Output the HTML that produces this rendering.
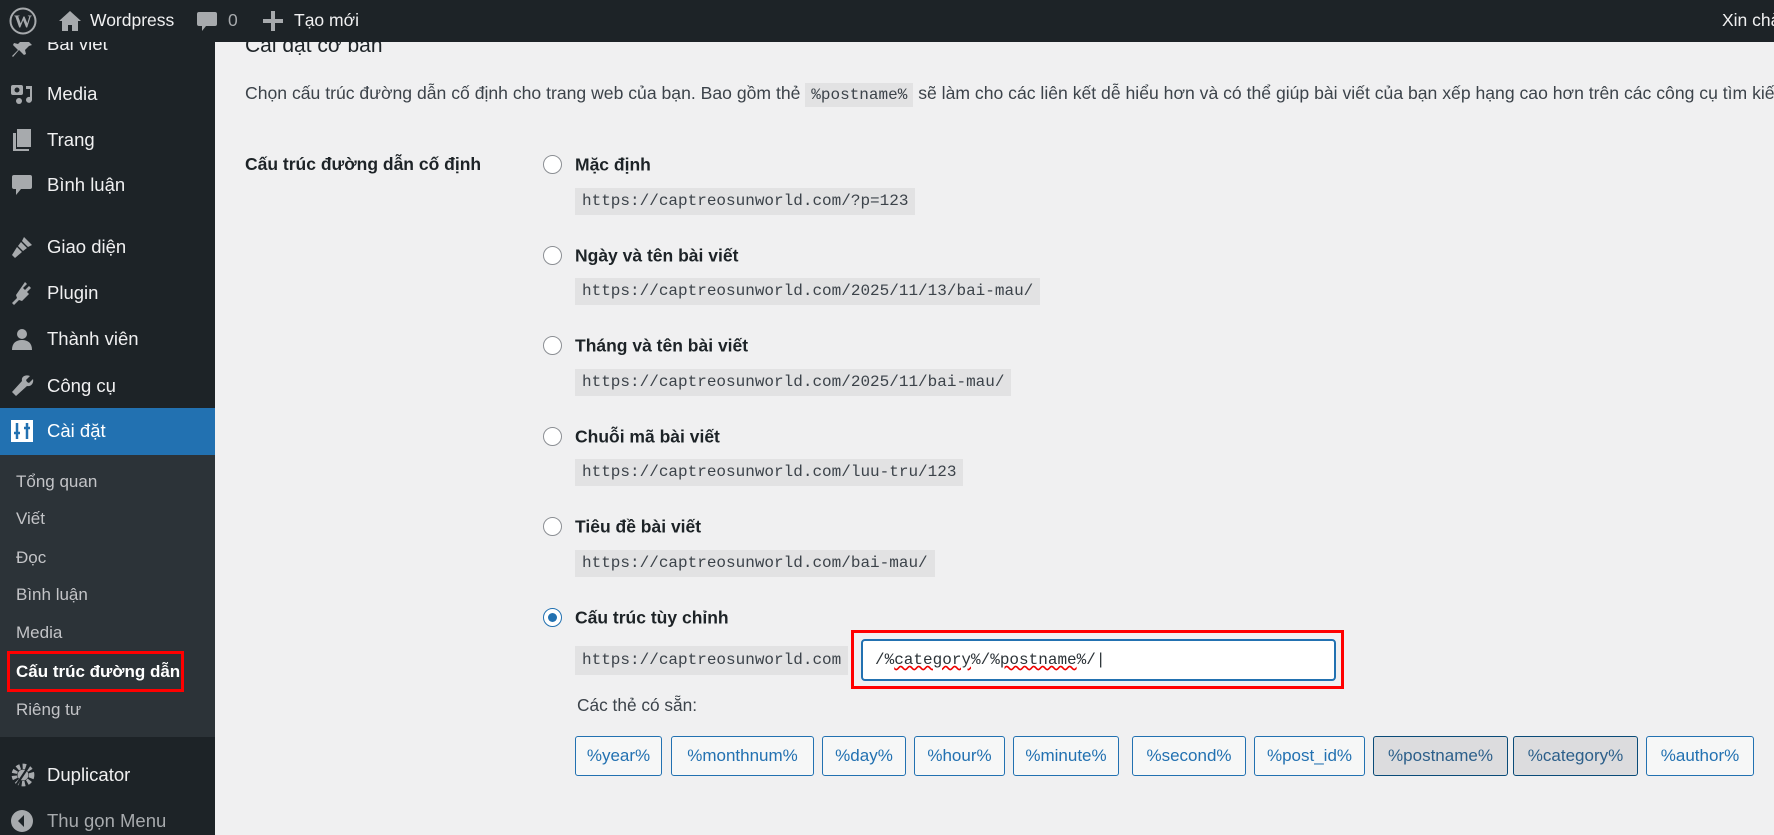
<!DOCTYPE html>
<html><head><meta charset="utf-8"><style>
*{box-sizing:border-box;margin:0;padding:0}
body{width:1774px;height:835px;overflow:hidden;background:#f0f0f1;font-family:"Liberation Sans","DejaVu Sans",sans-serif;color:#1d2327;position:relative}
.bar{position:absolute;left:0;top:0;width:1774px;height:42px;background:#1d2327;color:#f0f0f1;font-size:17.5px;z-index:2;overflow:hidden}
.bar span,.bar svg{position:absolute;white-space:nowrap}
.side{position:absolute;left:0;top:42px;width:215px;height:793px;background:#1d2327}
.mi{position:absolute;left:47px;color:#f0f0f1;font-size:18.5px;transform:translateY(-50%);white-space:nowrap}
.ic{position:absolute;left:10px;width:24px;height:24px;transform:translateY(-50%)}
.sub{position:absolute;left:0;top:413px;width:215px;height:282px;background:#2c3338}
.si{position:absolute;left:16px;color:#c3c4c7;font-size:17px;transform:translateY(-50%);white-space:nowrap}
.abs{position:absolute}
.code{position:absolute;left:575px;height:27px;background:#e2e2e3;font-family:"Liberation Mono",monospace;font-size:16px;line-height:27px;padding:0 7px;color:#3c434a}
.radio{position:absolute;left:543px;width:19px;height:19px;border:1px solid #8c8f94;border-radius:50%;background:#fff}
.lab{position:absolute;left:575px;font-size:17.5px;font-weight:bold;color:#1d2327;transform:translateY(-50%)}
.btn{position:absolute;top:736px;height:40px;border:1px solid #2271b1;border-radius:3px;background:#f6f7f7;color:#2271b1;font-size:17px;line-height:38px;text-align:center}
.btn.on{background:#dcdcde;border-color:#0a4b78;color:#2c5f8a}
</style></head><body>
<div class="bar">
<svg style="left:9px;top:7px" width="28" height="28" viewBox="0 0 28 28"><circle cx="14" cy="14" r="12.5" fill="none" stroke="#a7aaad" stroke-width="2"/><text x="14" y="20.5" text-anchor="middle" font-family="Liberation Serif" font-weight="bold" font-size="18" fill="#a7aaad">W</text></svg>
<svg style="left:58px;top:10px" width="24" height="22" viewBox="0 0 24 22"><path d="M12 1L1 11h3v10h6v-6h4v6h6V11h3z" fill="#a7aaad"/></svg>
<span style="left:90px;top:10px">Wordpress</span>
<svg style="left:196px;top:11px" width="22" height="22" viewBox="0 0 22 22"><path d="M3 1h16a2 2 0 0 1 2 2v10a2 2 0 0 1-2 2H10l-4 5v-5H3a2 2 0 0 1-2-2V3a2 2 0 0 1 2-2z" fill="#a7aaad"/></svg>
<span style="left:228px;top:10px;color:#a7aaad">0</span>
<svg style="left:263px;top:11px" width="20" height="20" viewBox="0 0 20 20"><path d="M8 0h4v8h8v4h-8v8H8v-8H0V8h8z" fill="#a7aaad"/></svg>
<span style="left:294px;top:10px">Tạo mới</span>
<span style="left:1722px;top:10px">Xin chào</span>
</div>
<div class="side">
<div class="sub"></div>
<div class="abs" style="left:0;top:366px;width:215px;height:47px;background:#2271b1"></div>
<div class="abs" style="left:205px;top:380px;width:0;height:0;border:10px solid transparent;border-right-color:#f0f0f1"></div>
</div>
<div style="position:absolute;left:0;top:42px;width:215px;height:793px">
<svg class="ic" style="top:6px" viewBox="0 0 24 24"><path d="M15 2l7 7-3 1-4 4 1 4-2 1-5-5-6 7-1-1 6-6-5-5 1-2 4 1 4-4z" fill="#a7aaad"/></svg>
<div class="mi" style="top:2px">Bài viết</div>
<svg class="ic" style="top:52px" viewBox="0 0 24 24"><rect x="1" y="3" width="12" height="10" rx="2" fill="#a7aaad"/><circle cx="7" cy="8" r="2.5" fill="#1d2327"/><path d="M16 4h6v14a3 3 0 1 1-2-3V7h-4z" fill="#a7aaad"/><circle cx="9" cy="19" r="3" fill="#a7aaad"/></svg>
<div class="mi" style="top:52px">Media</div>
<svg class="ic" style="top:98px" viewBox="0 0 24 24"><path d="M3 5h3v16h13v2H3z" fill="#a7aaad"/><rect x="7" y="1" width="14" height="18" fill="#a7aaad"/></svg>
<div class="mi" style="top:98px">Trang</div>
<svg class="ic" style="top:143px" viewBox="0 0 24 24"><path d="M4 2h16a2 2 0 0 1 2 2v10a2 2 0 0 1-2 2h-9l-5 6v-6H4a2 2 0 0 1-2-2V4a2 2 0 0 1 2-2z" fill="#a7aaad"/></svg>
<div class="mi" style="top:143px">Bình luận</div>
<svg class="ic" style="top:205px" viewBox="0 0 24 24"><path d="M14 2l8 8-4 2-6-6zM11 7l6 6-4 3-5-5zM7 12l5 5-7 6-3-3z" fill="#a7aaad"/></svg>
<div class="mi" style="top:205px">Giao diện</div>
<svg class="ic" style="top:251px" viewBox="0 0 24 24"><path d="M15 1l2 2-4 4 2 2 4-4 2 2-4 4 2 2-7 7-3-1-5 5-2-2 5-5-1-3z" fill="#a7aaad"/></svg>
<div class="mi" style="top:251px">Plugin</div>
<svg class="ic" style="top:297px" viewBox="0 0 24 24"><circle cx="12" cy="7" r="5" fill="#a7aaad"/><path d="M2 23c0-7 4-10 10-10s10 3 10 10z" fill="#a7aaad"/></svg>
<div class="mi" style="top:297px">Thành viên</div>
<svg class="ic" style="top:344px" viewBox="0 0 24 24"><path d="M20 2l-4 4 1 2 2 1 4-4c1 4-2 8-6 7L6 22l-4-4 10-11c-1-4 3-7 8-5z" fill="#a7aaad"/></svg>
<div class="mi" style="top:344px">Công cụ</div>
<svg class="ic" style="top:389px" viewBox="0 0 24 24"><rect x="1" y="1" width="22" height="22" fill="#fff"/><path d="M7 4v16M17 4v16M4 14h6M14 9h6" stroke="#2271b1" stroke-width="2.5"/></svg>
<div class="mi" style="top:389px;color:#fff">Cài đặt</div>
<div class="si" style="top:440px">Tổng quan</div>
<div class="si" style="top:477px">Viết</div>
<div class="si" style="top:516px">Đọc</div>
<div class="si" style="top:553px">Bình luận</div>
<div class="si" style="top:591px">Media</div>
<div class="abs" style="left:7px;top:609px;width:177px;height:41px;border:3px solid #f00"></div>
<div class="si" style="top:630px;color:#fff;font-weight:bold">Cấu trúc đường dẫn</div>
<div class="si" style="top:668px">Riêng tư</div>
<svg class="ic" style="top:733px;width:26px;height:26px" viewBox="0 0 24 24"><circle cx="12" cy="12" r="8" fill="none" stroke="#a7aaad" stroke-width="5" stroke-dasharray="3 2.3"/><circle cx="12" cy="12" r="5" fill="#a7aaad"/><path d="M18 3L6 21" stroke="#1d2327" stroke-width="2"/></svg>
<div class="mi" style="top:733px">Duplicator</div>
<svg class="ic" style="top:779px" viewBox="0 0 24 24"><circle cx="12" cy="12" r="11" fill="#a7aaad"/><path d="M14 6l-6 6 6 6z" fill="#1d2327"/></svg>
<div class="mi" style="top:779px;color:#a7aaad">Thu gọn Menu</div>
</div>

<div class="abs" style="left:245px;top:34px;font-size:21px;color:#1d2327">Cài đặt cơ bản</div>
<div class="abs" style="left:245px;top:83px;font-size:17.6px;color:#3c434a;white-space:nowrap">Chọn cấu trúc đường dẫn cố định cho trang web của bạn. Bao gồm thẻ <span style="font-family:'Liberation Mono',monospace;font-size:16px;background:#e2e2e3;padding:3px 6px">%postname%</span> sẽ làm cho các liên kết dễ hiểu hơn và có thể giúp bài viết của bạn xếp hạng cao hơn trên các công cụ tìm kiếm.</div>
<div class="abs" style="left:245px;top:154px;font-size:17.5px;font-weight:bold">Cấu trúc đường dẫn cố định</div>

<div class="radio" style="top:155px"></div><div class="lab" style="top:165px">Mặc định</div>
<div class="code" style="top:188px">https://captreosunworld.com/?p=123</div>
<div class="radio" style="top:246px"></div><div class="lab" style="top:256px">Ngày và tên bài viết</div>
<div class="code" style="top:278px">https://captreosunworld.com/2025/11/13/bai-mau/</div>
<div class="radio" style="top:336px"></div><div class="lab" style="top:346px">Tháng và tên bài viết</div>
<div class="code" style="top:369px">https://captreosunworld.com/2025/11/bai-mau/</div>
<div class="radio" style="top:427px"></div><div class="lab" style="top:437px">Chuỗi mã bài viết</div>
<div class="code" style="top:459px">https://captreosunworld.com/luu-tru/123</div>
<div class="radio" style="top:517px"></div><div class="lab" style="top:527px">Tiêu đề bài viết</div>
<div class="code" style="top:550px">https://captreosunworld.com/bai-mau/</div>
<div class="radio" style="top:608px;border-color:#2271b1"><div style="position:absolute;left:4px;top:4px;width:9px;height:9px;border-radius:50%;background:#2271b1"></div></div>
<div class="lab" style="top:618px">Cấu trúc tùy chỉnh</div>
<div class="code" style="top:646px;height:29px;line-height:29px">https://captreosunworld.com</div>
<div class="abs" style="left:851px;top:630px;width:493px;height:59px;border:3px solid #f00"></div>
<div class="abs" style="left:861px;top:639px;width:475px;height:42px;border:2px solid #2271b1;border-radius:4px;background:#fff;font-family:'Liberation Mono',monospace;font-size:16px;line-height:38px;padding-left:12px;color:#2c3338">/%<span style="text-decoration:underline wavy #e00">category</span>%/%<span style="text-decoration:underline wavy #e00">postname</span>%/|</div>
<div class="abs" style="left:577px;top:695px;font-size:17.3px;color:#3c434a">Các thẻ có sẵn:</div>

<div class="btn" style="left:575px;width:87px">%year%</div>
<div class="btn" style="left:671px;width:143px">%monthnum%</div>
<div class="btn" style="left:822px;width:84px">%day%</div>
<div class="btn" style="left:914px;width:91px">%hour%</div>
<div class="btn" style="left:1013px;width:106px">%minute%</div>
<div class="btn" style="left:1132px;width:114px">%second%</div>
<div class="btn" style="left:1254px;width:111px">%post_id%</div>
<div class="btn on" style="left:1373px;width:135px">%postname%</div>
<div class="btn on" style="left:1513px;width:125px">%category%</div>
<div class="btn" style="left:1646px;width:108px">%author%</div>
</body></html>
